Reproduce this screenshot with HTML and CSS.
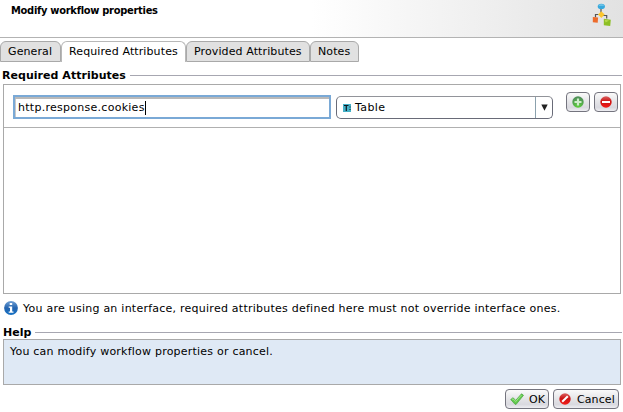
FILE: index.html
```
<!DOCTYPE html>
<html lang="en">
<head>
<meta charset="utf-8">
<title>Modify workflow properties</title>
<link rel="stylesheet" href="styles.css">
</head>
<body>
<header class="header">
  <h1>Modify workflow properties</h1>
  <svg class="flow" width="20" height="24" viewBox="0 0 20 24">
    <path d="M9 6v4M6.500 11.500H3.500v3M11 12.500h3.700v3" fill="none" stroke="#555" stroke-width="1.200"/>
    <ellipse cx="9.300" cy="3.400" rx="3.600" ry="2.700" fill="#38a9dd"/>
    <path d="M6.300 2.700q3-2.700 6 0z" fill="#7bcaea"/>
    <path d="M9.300 8.300l3.400 3.300-3.400 3.300L6 11.600z" fill="#fcc62d"/>
    <path d="M.8 14l5.300.6-.4 5.200-4.900-.6z" fill="#ed6b2b"/>
    <path d="M11.800 15.800l7 1-.6 6.300-6.400-.9z" fill="#8dbf24"/>
    <path d="M12.600 16.800l4.500.7-3.500 2z" fill="#b7d94b"/>
  </svg>
</header>
<nav class="tabs">
  <div class="tab general">General</div>
  <div class="tab active required">Required Attributes</div>
  <div class="tab provided">Provided Attributes</div>
  <div class="tab notes">Notes</div>
</nav>
<h2 class="legend attrs"><span>Required Attributes</span></h2>
<section class="list">
  <div class="row">
    <div class="field"><span>http.response.cookies</span><i class="caret"></i></div>
    <div class="combo">
      <svg width="8" height="8" viewBox="0 0 8 8"><path d="M0 0h8v8H0z" fill="#45b1c8"/><path d="M1 1.500h4.500M3.300 1.500V7" stroke="#101820" stroke-width="1.200"/><path d="M6.500 2.500h1v1h-1zM6.500 5h1v1h-1z" fill="#101820"/></svg>
      <span>Table</span>
      <div class="arrow"><svg width="7" height="7" viewBox="0 0 7 7"><path d="M.3.500h6.400L3.500 6.800z" fill="#222"/></svg></div>
    </div>
    <div class="btn small">
      <svg width="12" height="12" viewBox="0 0 12 12"><defs><radialGradient id="g" cx=".5" cy=".9" r=".8"><stop offset="0" stop-color="#5bd03a"/><stop offset="1" stop-color="#4f9158"/></radialGradient></defs><circle cx="6" cy="6" r="5.700" fill="url(#g)"/><path d="M6 2.500v7M2.500 6h7" stroke="#cfeccb" stroke-width="2.200"/></svg>
    </div>
    <div class="btn small">
      <svg width="12" height="12" viewBox="0 0 12 12"><defs><linearGradient id="r" x2="0" y2="1"><stop offset="0" stop-color="#d96060"/><stop offset=".45" stop-color="#cc1414"/><stop offset="1" stop-color="#f31c18"/></linearGradient></defs><circle cx="6" cy="6" r="5.700" fill="url(#r)"/><path d="M2 6h8" stroke="#fff" stroke-width="2"/></svg>
    </div>
  </div>
</section>
<p class="info">
  <svg width="14" height="14" viewBox="0 0 14 14"><defs><linearGradient id="b" x2="0" y2="1"><stop offset="0" stop-color="#6f9fd4"/><stop offset=".5" stop-color="#2464af"/><stop offset="1" stop-color="#1672c5"/></linearGradient></defs><circle cx="7" cy="7" r="6.900" fill="url(#b)"/><path d="M5.700 2h2.500v2H5.700zM4.700 5.500h3.500v5h1.300v1.200H4.700v-1.200H6V6.700H4.700z" fill="#fff"/></svg>
  <span>You are using an interface, required attributes defined here must not override interface ones.</span>
</p>
<h2 class="legend helptitle"><span>Help</span></h2>
<section class="help">You can modify workflow properties or cancel.</section>
<footer class="actions">
  <div class="btn ok">
    <svg width="14" height="12" viewBox="0 0 14 12"><path d="M.7 6.500l2.400-1.800 2.600 2.700L11.500.8l2 1.500-7.300 9H5z" fill="#63ca4d" stroke="#43a23b" stroke-width=".7"/><path d="M2 6.500l1-.7 2.700 2.700L11.500 2" fill="none" stroke="#a2e68c" stroke-width=".9"/></svg>
    <span>OK</span>
  </div>
  <div class="btn cancel">
    <svg width="12" height="12" viewBox="0 0 12 12"><circle cx="6" cy="6" r="5.700" fill="url(#r)"/><path d="M3.200 8.800l5.600-5.600" stroke="#fff" stroke-width="2"/></svg>
    <span>Cancel</span>
  </div>
</footer>
</body>
</html>
```

FILE: styles.css
```
* { box-sizing: border-box; }
body {
  margin: 0;
  width: 623px;
  height: 412px;
  overflow: hidden;
  background: #fff;
  color: #000;
  font: 11px/14px "DejaVu Sans", sans-serif;
}
svg { display: block; flex: none; }
h1, h2, p { margin: 0; font-size: 11px; white-space: nowrap; }
.info { font-weight: 400; }
.header {
  display: flex;
  justify-content: space-between;
  height: 38px;
  padding: 3px 11px 0;
  border-bottom: 1px solid #b3b3b3;
  background: linear-gradient(90deg, #fff 50%, #e2e2e2);
}
h1 {
  padding-top: 1px;
  font-family: "DejaVu Sans Condensed", "DejaVu Sans", sans-serif;
  font-stretch: condensed;
  letter-spacing: -.28px;
}
.tabs { display: flex; height: 24px; padding-top: 3px; }
.tab {
  height: 21px;
  padding: 3px 0 0 7px;
  border: 1px solid #a9a9a9;
  border-radius: 6px 6px 0 0;
  background: #e1e1e1;
  letter-spacing: .11px;
  white-space: nowrap;
}
.tab.active { background: #fff; border-bottom: 0; border-color: #b8b8b8; }
.general { width: 61px; }
.required { width: 125px; }
.provided { width: 124px; }
.notes { width: 49px; }
.legend { display: flex; align-items: center; gap: 4px; height: 14px; padding-left: 2px; letter-spacing: .04px; }
.legend::after { content: ""; flex: 1; height: 1px; margin-right: 1px; background: #a7a7b1; }
.legend span { padding-top: 1px; }
.attrs { margin-top: 6px; }
.list { height: 210px; margin: 2px 2px 0 3px; border: 1px solid #a9a9a9; }
.row {
  display: flex;
  height: 43px;
  padding: 7px 2px 0 9px;
  border-bottom: 1px solid #b0b0b0;
}
.field {
  display: flex;
  align-items: center;
  width: 318px;
  height: 24px;
  margin: 3px 5px 0 0;
  padding: 2px 0 0 3px;
  border: 2px solid #7aa9d6;
  box-shadow: inset 0 2px 0 #b9b9b9, inset 1px 0 0 #c9c9c9;
  letter-spacing: .27px;
}
.caret { width: 1px; height: 14px; background: #000; }
.combo {
  display: flex;
  align-items: center;
  width: 217px;
  height: 23px;
  margin: 4px 13px 0 0;
  padding-left: 6px;
  gap: 4px;
  border: 1px solid #696b78;
  border-top-color: #92949a;
  border-radius: 5px;
  letter-spacing: .4px;
}
.arrow {
  display: flex;
  align-items: center;
  justify-content: center;
  width: 17px;
  height: 21px;
  margin-left: auto;
  border-left: 1px solid #8ba1ad;
}
.btn {
  display: flex;
  align-items: center;
  height: 20px;
  border: 1px solid #74747e;
  border-radius: 4px;
  background: linear-gradient(#fafafa, #e4e4e7 50%, #d9d9df 80%, #eeeef2);
  white-space: nowrap;
}
.btn span { padding-top: 2px; }
.small { width: 24px; justify-content: center; }
.small + .small { margin-left: 4px; }
.info { display: flex; align-items: center; gap: 5px; height: 14px; margin: 7px 0 0 4px; letter-spacing: .245px; }
.info span { padding-top: 2px; }
.helptitle { margin-top: 10px; padding-left: 3px; }
.help {
  height: 46px;
  margin: 0 2px 0 3px;
  padding: 5px 0 0 6px;
  border: 1px solid #a9a9a9;
  background: #dfe9f5;
  letter-spacing: .22px;
}
.actions { display: flex; justify-content: flex-end; gap: 4px; margin: 4px 4px 0 0; }
.ok { width: 44px; padding-left: 4px; gap: 5px; }
.cancel { width: 66px; padding-left: 5px; gap: 6px; letter-spacing: .1px; }
```
